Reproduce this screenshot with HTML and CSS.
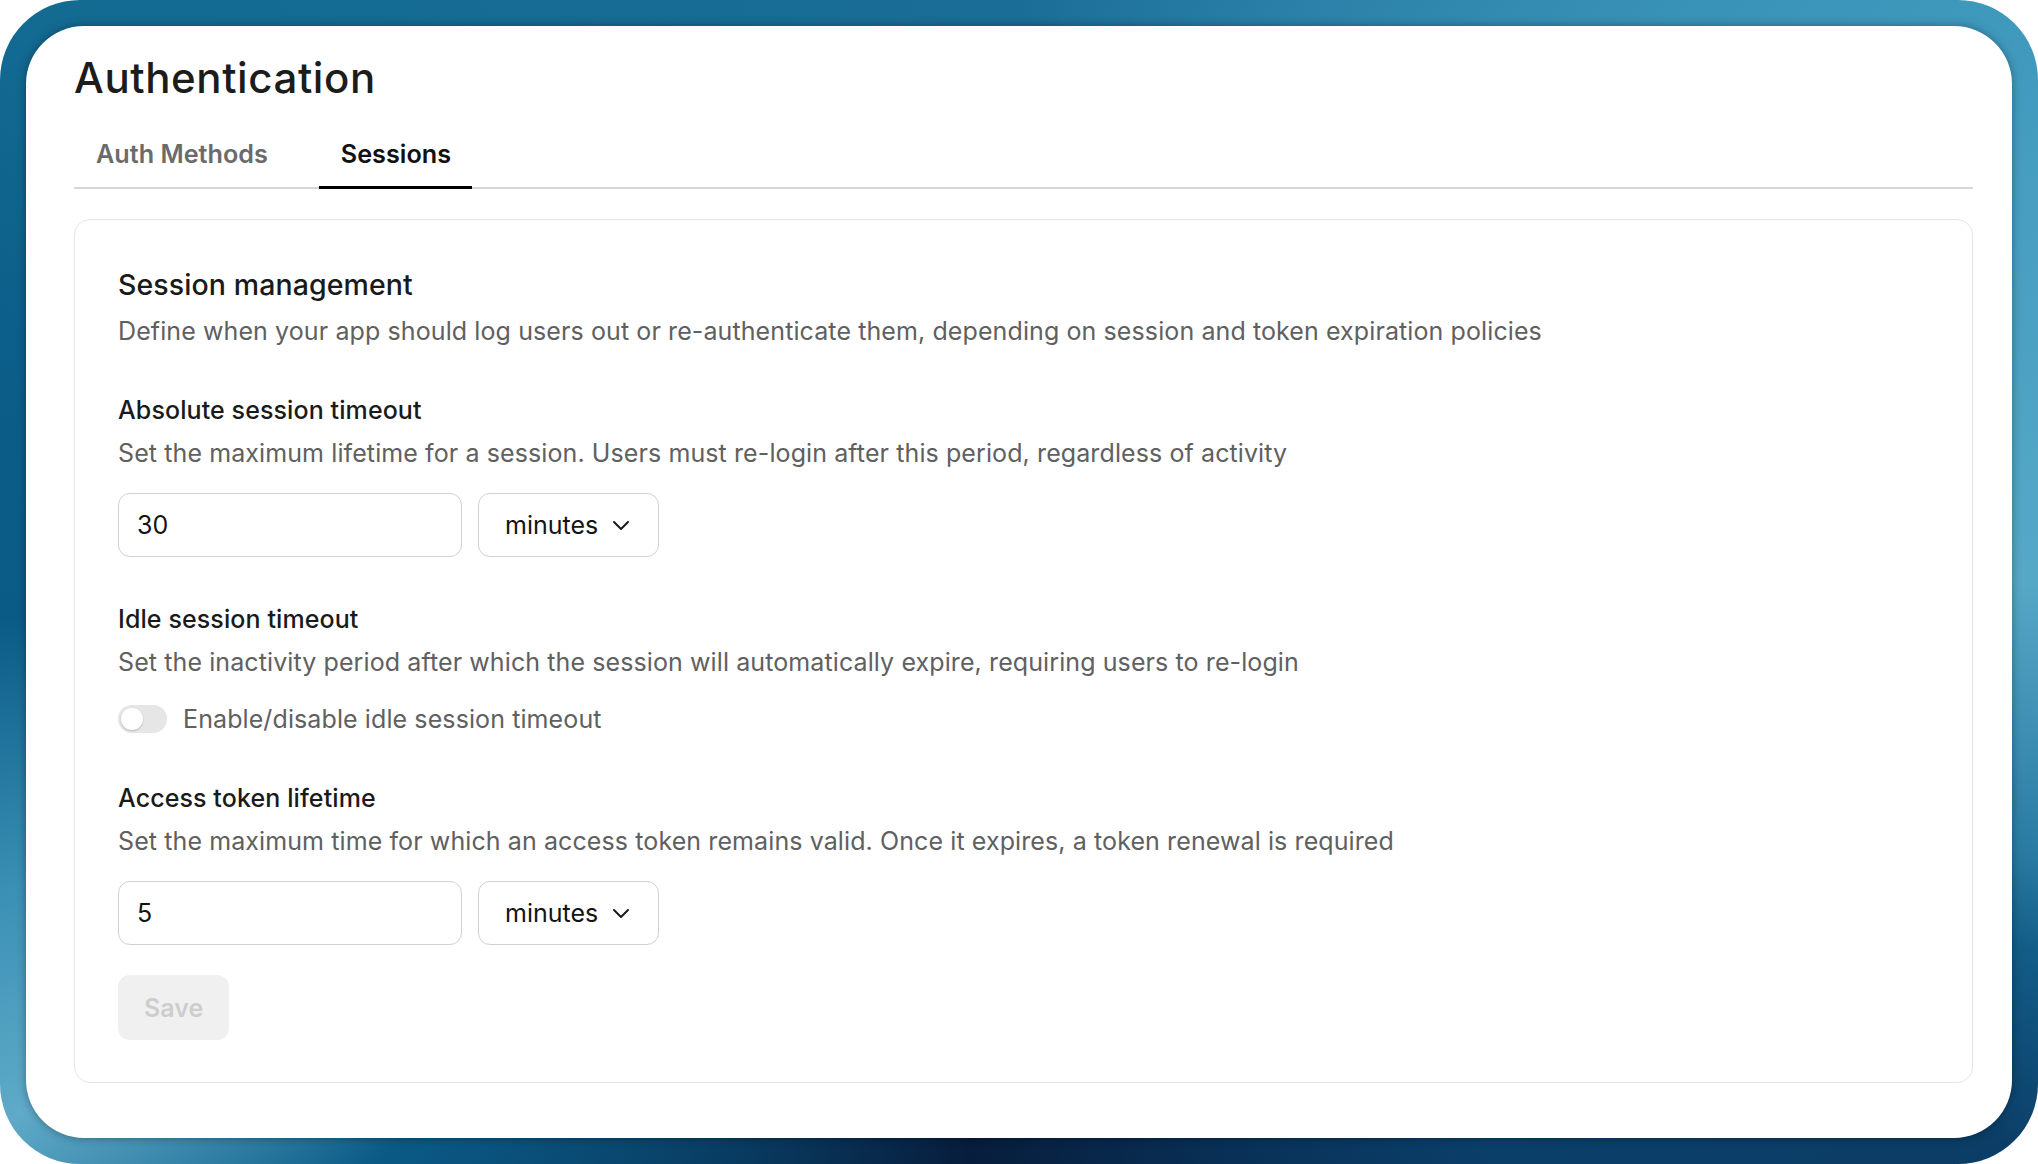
FILE: index.html
```html
<!DOCTYPE html>
<html lang="en">
<head>
    <meta charset="UTF-8">
    <meta name="viewport" content="width=device-width, initial-scale=1.0">
    <title>Authentication</title>
    <link rel="stylesheet" href="styles.css">
</head>
<body>
    <div class="frame">
        <div class="panel">
            <h1>Authentication</h1>

            <div class="tabs">
                <div class="tab">Auth Methods</div>
                <div class="tab active">Sessions</div>
            </div>

            <div class="card">
                <h2>Session management</h2>
                <p class="desc">Define when your app should log users out or re-authenticate them, depending on session and token expiration policies</p>

                <div class="field">
                    <div class="label">Absolute session timeout</div>
                    <p class="desc">Set the maximum lifetime for a session. Users must re-login after this period, regardless of activity</p>
                    <div class="control-row">
                        <div class="input">30</div>
                        <div class="select">
                            <span>minutes</span>
                            <svg width="18" height="11" viewBox="0 0 18 11"><polyline points="2,2 9,9 16,2" fill="none" stroke="#1a1a1a" stroke-width="2" stroke-linecap="round" stroke-linejoin="round"/></svg>
                        </div>
                    </div>
                </div>

                <div class="field">
                    <div class="label">Idle session timeout</div>
                    <p class="desc">Set the inactivity period after which the session will automatically expire, requiring users to re-login</p>
                    <div class="toggle-row">
                        <div class="toggle"><div class="knob"></div></div>
                        <span>Enable/disable idle session timeout</span>
                    </div>
                </div>

                <div class="field">
                    <div class="label">Access token lifetime</div>
                    <p class="desc">Set the maximum time for which an access token remains valid. Once it expires, a token renewal is required</p>
                    <div class="control-row">
                        <div class="input">5</div>
                        <div class="select">
                            <span>minutes</span>
                            <svg width="18" height="11" viewBox="0 0 18 11"><polyline points="2,2 9,9 16,2" fill="none" stroke="#1a1a1a" stroke-width="2" stroke-linecap="round" stroke-linejoin="round"/></svg>
                        </div>
                    </div>
                </div>

                <button class="save" disabled>Save</button>
            </div>
        </div>
    </div>
</body>
</html>
```

FILE: styles.css
```css
html, body {
    margin: 0;
    background: #ffffff;
}
body {
    font-family: Inter, "Noto Sans", sans-serif;
    color: #1a1a1a;
}
.frame {
    height: 100vh;
    box-sizing: border-box;
    padding: 26px;
    border-radius: 80px;
    background: conic-gradient(from 0deg at 50% 50%,
        #1a6d97 0deg, #3f99bd 60deg, #56a8c7 90deg, #2a7ba3 105deg,
        #125d88 110deg, #0b3d66 120deg, #0a3f6a 140deg, #071d3c 185deg,
        #0a5a86 228deg, #5eaac8 242deg, #3a90b5 253deg, #0a5b86 268deg,
        #0c5f8a 285deg, #136b92 300deg, #1a6d97 360deg);
}
.panel {
    height: 100%;
    box-sizing: border-box;
    background: #ffffff;
    border-radius: 58px;
    padding: 26px 39px 0 48px;
    box-shadow: 0 0 10px rgba(0, 0, 0, 0.35);
}
h1 {
    margin: 0;
    font-size: 42px;
    line-height: 52px;
    font-weight: 500;
    color: #1c1c1c;
    letter-spacing: 0.6px;
}
.tabs {
    display: flex;
    gap: 30px;
    margin-top: 25px;
    border-bottom: 2px solid #d6d6d6;
}
.tab {
    position: relative;
    padding: 9px 21px 17px 22px;
    font-size: 25.2px;
    line-height: 32px;
    font-weight: 600;
    color: #6b6b6b;
}
.tab.active {
    color: #111111;
}
.tab.active::after {
    content: "";
    position: absolute;
    left: 0;
    right: 0;
    bottom: -2px;
    height: 3px;
    background: #000000;
}
.card {
    margin-top: 30px;
    border: 1px solid #e6e6e6;
    border-radius: 16px;
    padding: 47px 43px 42px 43px;
}
h2 {
    margin: 0;
    font-size: 28.5px;
    line-height: 36px;
    font-weight: 500;
    color: #1a1a1a;
    letter-spacing: 0.1px;
}
.desc {
    margin: 11px 0 0 0;
    font-size: 25px;
    line-height: 34px;
    color: #606060;
    letter-spacing: 0.1px;
}
.field {
    margin-top: 45px;
}
.label {
    font-size: 25px;
    line-height: 34px;
    font-weight: 500;
    color: #1a1a1a;
    letter-spacing: 0.1px;
}
.field .desc {
    margin-top: 9px;
}
.control-row {
    display: flex;
    gap: 16px;
    margin-top: 23px;
}
.input,
.select {
    height: 64px;
    box-sizing: border-box;
    border: 1px solid #d0d0d0;
    border-radius: 12px;
    display: flex;
    align-items: center;
    font-size: 25px;
    color: #141414;
}
.input {
    width: 344px;
    padding-left: 18px;
}
.select {
    width: 181px;
    padding-left: 26px;
    gap: 14px;
}
.toggle-row {
    display: flex;
    align-items: center;
    gap: 16px;
    margin-top: 23px;
    font-size: 25px;
    line-height: 34px;
    color: #606060;
    letter-spacing: 0.1px;
}
.toggle {
    width: 49px;
    height: 28px;
    border-radius: 14px;
    background: #e6e6e6;
    display: flex;
    align-items: center;
    padding-left: 3px;
    box-sizing: border-box;
}
.knob {
    width: 22px;
    height: 22px;
    border-radius: 50%;
    background: #ffffff;
    box-shadow: 0 1px 2px rgba(0, 0, 0, 0.2);
}
.save {
    display: block;
    margin-top: 30px;
    height: 65px;
    padding: 0 26px;
    border: none;
    border-radius: 12px;
    background: #f0f0f0;
    color: #cdcdcd;
    font-family: Inter, "Noto Sans", sans-serif;
    font-size: 25px;
    font-weight: 600;
}
```
